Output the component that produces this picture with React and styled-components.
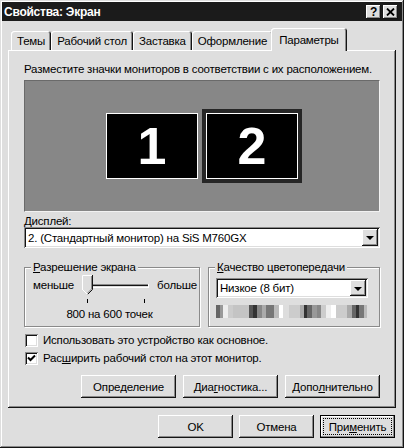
import styled, { createGlobalStyle } from 'styled-components'

const FACE = '#dedede'

const GlobalStyle = createGlobalStyle`
  * { box-sizing: border-box; }
  body {
    margin: 0;
    background: #fff;
    font-family: "Liberation Sans", Arial, sans-serif;
    font-size: 11.5px;
    letter-spacing: -0.2px;
    color: #000;
  }
`

const raised = `
  box-shadow: inset -1px -1px #141414, inset 1px 1px #fff,
    inset -2px -2px #8a8a8a, inset 2px 2px ${FACE};
`

const sunken = `
  box-shadow: inset 1px 1px #8a8a8a, inset -1px -1px #fff,
    inset 2px 2px #141414, inset -2px -2px ${FACE};
`

const Window = styled.div`
  width: 404px;
  height: 448px;
  padding: 2px;
  display: flex;
  flex-direction: column;
  background: ${FACE};
  box-shadow: inset -1px -1px #141414, inset 1px 1px ${FACE},
    inset -2px -2px #8a8a8a, inset 2px 2px #fff;
`

const TitleBar = styled.div`
  height: 19px;
  display: flex;
  align-items: center;
  justify-content: space-between;
  padding: 0 4px 0 2px;
  background: #1b1b1b;
  color: #fff;
  font-weight: bold;
  font-size: 12px;
  letter-spacing: -0.25px;
`

const TitleButtons = styled.div`
  display: flex;
  gap: 2px;
`

const CaptionButton = styled.div`
  width: 15px;
  height: 14px;
  display: flex;
  align-items: center;
  justify-content: center;
  background: ${FACE};
  color: #000;
  font-size: 12px;
  font-weight: bold;
  ${raised}
`

const Body = styled.div`
  flex: 1;
  display: flex;
  flex-direction: column;
  padding: 7px 6px 8px;
`

const TabStrip = styled.div`
  display: flex;
  align-items: flex-end;
  height: 22px;
  padding-left: 3px;
  position: relative;
  z-index: 1;
`

const Tab = styled.div`
  height: ${p => (p.$active ? 23 : 19)}px;
  padding: ${p => (p.$active ? '5px 8px 0' : '3px 6px 0')};
  margin: 0 ${p => (p.$active ? '-2px -1px' : '0 0')};
  line-height: 14px;
  white-space: nowrap;
  background: ${FACE};
  border-radius: 3px 3px 0 0;
  position: relative;
  z-index: ${p => (p.$active ? 2 : 1)};
  box-shadow: inset 1px 1px #fff, inset -1px 0 #141414, inset -2px 0 #8a8a8a;
`

const Panel = styled.div`
  height: 358px;
  display: flex;
  flex-direction: column;
  padding: 12px 16px 10px;
  box-shadow: inset -1px -1px #141414, inset 1px 1px #fff,
    inset -2px -2px #8a8a8a;
`

const Hint = styled.div`
  line-height: 14px;
  margin-bottom: 4px;
  white-space: nowrap;
`

const Desk = styled.div`
  height: 132px;
  display: flex;
  align-items: center;
  justify-content: center;
  gap: 8px;
  background: #878787;
  border: 1px solid;
  border-color: #6a6a6a #f2f2f2 #f2f2f2 #6a6a6a;
`

const Monitor = styled.div`
  width: 92px;
  height: 66px;
  display: flex;
  align-items: center;
  justify-content: center;
  background: #000;
  border: 1px solid #fff;
  color: #fff;
  font-weight: bold;
  font-size: 52px;
  letter-spacing: 0;
  line-height: 1;
  outline: ${p => (p.$selected ? '4px solid #262626' : 'none')};
`

const FieldLabel = styled.div`
  margin-top: 4px;
  line-height: 11px;
`

const U = styled.span`
  text-decoration: underline;
  text-underline-offset: 1px;
`

const Combo = styled.div`
  width: ${p => p.$width || 'auto'};
  height: ${p => p.$height || 21}px;
  display: flex;
  padding: 2px;
  background: #fff;
  ${sunken}
`

const ComboText = styled.div`
  flex: 1;
  padding-left: 2px;
  display: flex;
  align-items: center;
  white-space: nowrap;
`

const ComboButton = styled.div`
  width: 16px;
  display: flex;
  align-items: center;
  justify-content: center;
  background: ${FACE};
  ${raised}

  &::after {
    content: '';
    border-left: 4px solid transparent;
    border-right: 4px solid transparent;
    border-top: 4px solid #000;
    margin-top: 1px;
  }
`

const Groups = styled.div`
  display: grid;
  grid-template-columns: 176px 1fr;
  column-gap: 8px;
  margin-top: 13px;
`

const Group = styled.fieldset`
  margin: 0;
  padding: 0;
  min-width: 0;
  border: 1px solid #8a8a8a;
  box-shadow: inset 1px 1px #fff, 1px 1px 0 #fff;
`

const Legend = styled.legend`
  margin-left: 6px;
  padding: 0 2px;
  line-height: 12px;
  background: ${FACE};
`

const SliderRow = styled.div`
  display: flex;
  align-items: flex-start;
  margin-top: 1px;
  padding-left: 8px;
`

const SideLabel = styled.span`
  line-height: 14px;
  margin: 4px ${p => (p.$right ? '0 0 4px' : '5px 0 0')};
`

const Resolution = styled.div`
  margin: 3px 5px 5px 0;
  line-height: 14px;
  text-align: center;
`

const ColorBody = styled.div`
  padding: 5px 0 8px 7px;
`

const SEGMENTS = [
  [4, '#666'], [7, '#999'], [12, '#eee'], [17, '#ccc'], [33, '#c4c4c4'],
  [37, '#555'], [41, '#333'], [46, '#888'], [50, '#aaa'], [58, '#777'],
  [63, '#bbb'], [67, '#fff'], [73, '#ddd'], [84, '#ccc'], [88, '#aaa'],
  [91, '#333'], [96, '#666'], [101, '#999'], [105, '#888'], [110, '#ccc'],
  [115, '#eee'], [120, '#fff'], [131, '#ccc'], [136, '#aaa'], [140, '#666'],
  [143, '#333'], [148, '#777'], [151, '#bbb'], [154, '#ddd'],
]

const stripes = segs => {
  let from = 0
  const stops = segs.map(([to, c]) => {
    const s = `${c} ${from}px ${to}px`
    from = to
    return s
  })
  return `linear-gradient(to right, ${stops.join(', ')})`
}

const ColorBar = styled.div`
  width: 154px;
  height: 13px;
  margin-top: 7px;
  background: ${stripes(SEGMENTS)};
`

const Checks = styled.div`
  margin-top: 4px;
  padding-left: 1px;
`

const CheckRow = styled.div`
  height: 18px;
  display: flex;
  align-items: center;
  gap: 5px;
  white-space: nowrap;
`

const CheckBox = styled.div`
  width: 13px;
  height: 13px;
  display: flex;
  align-items: center;
  justify-content: center;
  background: #fff;
  ${sunken}
`

const ButtonRow = styled.div`
  display: flex;
  justify-content: flex-end;
  gap: ${p => p.$gap}px;
  margin-top: ${p => p.$top}px;
  padding-right: ${p => p.$right || 0}px;
`

const Button = styled.div`
  width: ${p => p.$width}px;
  height: 23px;
  display: flex;
  padding: 3px;
  background: ${FACE};
  ${raised}
  ${p => p.$default && `
    border: 1px solid #000;
    padding: 2px;
    box-shadow: inset -1px -1px #8a8a8a, inset 1px 1px #fff;
  `}
`

const ButtonLabel = styled.span`
  flex: 1;
  display: flex;
  align-items: center;
  justify-content: center;
  white-space: nowrap;
  border: 1px dotted ${p => (p.$focus ? '#000' : 'transparent')};
`

const CaptionX = () => (
  <svg width="9" height="8" viewBox="0 0 9 8">
    <path d="M1 0.5 L8 7.5 M8 0.5 L1 7.5" stroke="#000" strokeWidth="1.8" />
  </svg>
)

const Check = () => (
  <svg width="9" height="8" viewBox="0 0 9 8">
    <path d="M1 3.5 L3.5 6 L8 1.5" stroke="#000" strokeWidth="2" fill="none" />
  </svg>
)

const Slider = () => (
  <svg width="74" height="30" viewBox="0 0 74 30">
    <rect x="6" y="10" width="64" height="1" fill="#8a8a8a" />
    <rect x="6" y="11" width="64" height="1" fill="#141414" />
    <rect x="6" y="12" width="64" height="1" fill={FACE} />
    <rect x="6" y="13" width="64" height="1" fill="#fff" />
    <rect x="69" y="10" width="1" height="4" fill="#fff" />
    <path d="M3 1 H14 V15.5 L8.5 21 L3 15.5 Z" fill={FACE} />
    <path d="M3.5 16 V1.5 H13" stroke="#fff" fill="none" />
    <path d="M13.5 1 V15.5 L8.5 20.5" stroke="#141414" fill="none" />
    <path d="M12.5 2 V15 L8.5 19" stroke="#8a8a8a" fill="none" />
    <path d="M3.5 15.5 L8.5 20.5" stroke="#fff" fill="none" />
    <rect x="8" y="25" width="1" height="4" fill="#000" />
    <rect x="65" y="25" width="1" height="4" fill="#000" />
  </svg>
)

const TABS = ['Темы', 'Рабочий стол', 'Заставка', 'Оформление', 'Параметры']

export default function App() {
  return (
    <>
      <GlobalStyle />
      <Window>
        <TitleBar>
          <span>Свойства: Экран</span>
          <TitleButtons>
            <CaptionButton>?</CaptionButton>
            <CaptionButton><CaptionX /></CaptionButton>
          </TitleButtons>
        </TitleBar>
        <Body>
          <TabStrip>
            {TABS.map(t => (
              <Tab key={t} $active={t === 'Параметры'}>{t}</Tab>
            ))}
          </TabStrip>
          <Panel>
            <Hint>Разместите значки мониторов в соответствии с их расположением.</Hint>
            <Desk>
              <Monitor>1</Monitor>
              <Monitor $selected>2</Monitor>
            </Desk>
            <FieldLabel><U>Д</U>исплей:</FieldLabel>
            <Combo>
              <ComboText>2. (Стандартный монитор) на SiS M760GX</ComboText>
              <ComboButton />
            </Combo>
            <Groups>
              <Group>
                <Legend><U>Р</U>азрешение экрана</Legend>
                <SliderRow>
                  <SideLabel>меньше</SideLabel>
                  <Slider />
                  <SideLabel $right>больше</SideLabel>
                </SliderRow>
                <Resolution>800 на 600 точек</Resolution>
              </Group>
              <Group>
                <Legend><U>К</U>ачество цветопередачи</Legend>
                <ColorBody>
                  <Combo $width="152px" $height={20}>
                    <ComboText>Низкое (8 бит)</ComboText>
                    <ComboButton />
                  </Combo>
                  <ColorBar />
                </ColorBody>
              </Group>
            </Groups>
            <Checks>
              <CheckRow>
                <CheckBox />
                Использовать это устройство как основное.
              </CheckRow>
              <CheckRow>
                <CheckBox><Check /></CheckBox>
                <span>Рас<U>ш</U>ирить рабочий стол на этот монитор.</span>
              </CheckRow>
            </Checks>
            <ButtonRow $gap={7} $top={8}>
              <Button $width={95}><ButtonLabel>Опре<U>д</U>еление</ButtonLabel></Button>
              <Button $width={95}><ButtonLabel>Диа<U>г</U>ностика...</ButtonLabel></Button>
              <Button $width={95}><ButtonLabel>Допо<U>л</U>нительно</ButtonLabel></Button>
            </ButtonRow>
          </Panel>
          <ButtonRow $gap={6} $top={7} $right={1}>
            <Button $width={75}><ButtonLabel>OK</ButtonLabel></Button>
            <Button $width={75}><ButtonLabel>Отмена</ButtonLabel></Button>
            <Button $width={75} $default>
              <ButtonLabel $focus>При<U>м</U>енить</ButtonLabel>
            </Button>
          </ButtonRow>
        </Body>
      </Window>
    </>
  )
}
